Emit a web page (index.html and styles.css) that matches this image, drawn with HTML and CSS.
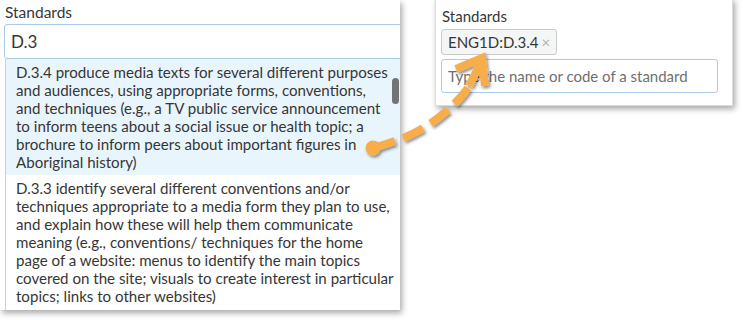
FILE: index.html
```html
<!DOCTYPE html>
<html lang="en">
<head>
  <meta charset="UTF-8" />
  <title>Standards</title>
  <link rel="stylesheet" href="styles.css">
</head>
<body>
  <div class="stage">
    <div class="panel search">
      <label class="field-label">Standards</label>
      <div class="text-input active">D.3</div>
      <div class="dropdown">
        <div class="option selected">D.3.4 produce media texts for several different purposes<br>
          and audiences, using appropriate forms, conventions,<br>
          and techniques (e.g., a TV public service announcement<br>
          to inform teens about a social issue or health topic; a<br>
          brochure to inform peers about important figures in<br>
          Aboriginal history)</div>
        <div class="option">D.3.3 identify several different conventions and/or<br>
          techniques appropriate to a media form they plan to use,<br>
          and explain how these will help them communicate<br>
          meaning (e.g., conventions/ techniques for the home<br>
          page of a website: menus to identify the main topics<br>
          covered on the site; visuals to create interest in particular<br>
          topics; links to other websites)</div>
        <div class="scroll-thumb"></div>
      </div>
    </div>

    <div class="panel result">
      <label class="field-label">Standards</label>
      <div class="chips">
        <span class="chip">ENG1D:D.3.4<span class="chip-x">×</span></span>
      </div>
      <div class="text-input placeholder">Type the name or code of a standard</div>
    </div>

    <svg class="arrow" width="743" height="320" viewBox="0 0 743 320">
      <defs>
        <filter id="shadow" x="-20%" y="-20%" width="140%" height="140%">
          <feDropShadow dx="1.5" dy="2" stdDeviation="1.5" flood-color="#000" flood-opacity="0.45"/>
        </filter>
      </defs>
      <g filter="url(#shadow)" stroke="#f8ad4c" fill="none" stroke-width="8">
        <path d="M374 148 L398 140 C 425 130 450 112 468 88" stroke-dasharray="22 9"/>
        <path d="M469 86 L481 62" />
        <polyline points="456,69 482,58 485,86" stroke-linejoin="miter" stroke-linecap="butt"/>
        <circle cx="373" cy="148" r="7.5" fill="#f8ad4c" stroke="none"/>
      </g>
    </svg>
  </div>
</body>
</html>
```

FILE: styles.css
```css
body {
  margin: 0;
  background: #fff;
  font-family: Lato, "Open Sans", sans-serif;
  color: #363636;
}
.stage {
  position: relative;
  display: flex;
  align-items: flex-start;
  gap: 35px;
  height: 320px;
  overflow: hidden;
}
.panel {
  background: #fff;
  box-shadow: 2px 3px 6px rgba(0,0,0,0.35);
}
.field-label {
  display: block;
  font-size: 15.5px;
  line-height: 18px;
}
.text-input {
  box-sizing: border-box;
  border: 1px solid #a9cbe7;
  border-radius: 3px;
  background: #fff;
}

/* left: search with open dropdown */
.search {
  width: 400px;
  padding-left: 4px;
  box-sizing: border-box;
  overflow: hidden;
}
.search .field-label {
  margin: 3px 0 0 1px;
  height: 21px;
}
.search .active {
  height: 35px;
  margin-right: -2px;
  padding: 0 6px;
  font-size: 17px;
  line-height: 33px;
}
.dropdown {
  position: relative;
  margin-left: 1px;
  border-left: 1px solid #d0d0d0;
  padding-bottom: 1px;
}
.option {
  padding: 4px 0 4px 10px;
  font-size: 15.1px;
  line-height: 18px;
  white-space: nowrap;
}
.option.selected {
  background: #e9f5fd;
}
.scroll-thumb {
  position: absolute;
  top: 19px;
  right: 1px;
  width: 7px;
  height: 26px;
  border-radius: 4px;
  background: #737373;
}

/* right: selected result */
.result {
  width: 298px;
  box-sizing: border-box;
  margin-top: -2px;
  padding: 7px 14px 12px 5px;
  border: 1px solid #dcdcdc;
  border-top: none;
}
.result .field-label {
  margin: 2px 0 0 1px;
  height: 21px;
  font-size: 15px;
}
.chips {
  margin-top: 1px;
}
.chip {
  display: inline-block;
  height: 26px;
  padding: 0 6px;
  box-sizing: border-box;
  border: 1px solid #cbcbcb;
  border-radius: 3px;
  background: #f4f5f5;
  font-size: 15px;
  line-height: 24px;
}
.chip-x {
  margin-left: 3px;
  color: #b3b3b3;
}
.result .placeholder {
  margin-top: 4px;
  height: 34px;
  padding: 0 6px;
  color: #6f6f6f;
  font-size: 15px;
  line-height: 32px;
}
.arrow {
  position: absolute;
  left: 0;
  top: 0;
  pointer-events: none;
}
```
